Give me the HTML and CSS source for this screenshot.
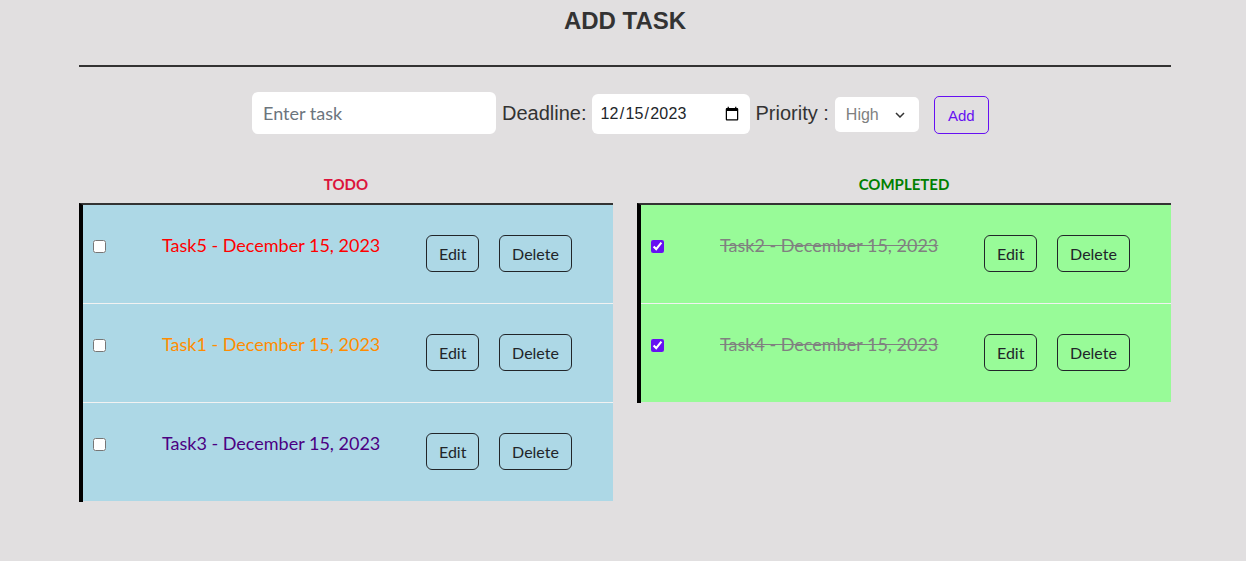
FILE: index.html
```html
<!DOCTYPE html>
<html lang="en">
<head>
<meta charset="utf-8">
<title>Task Manager</title>
<link rel="stylesheet" href="styles.css">
</head>
<body>
<div class="container">
  <h1 class="title">ADD TASK</h1>
  <div class="rule"></div>
  <div class="form-row">
    <input class="task-input" type="text" placeholder="Enter task">
    <label class="lbl lbl-deadline">Deadline:</label>
    <input class="date-input" type="date" value="2023-12-15">
    <label class="lbl lbl-priority">Priority :</label>
    <div class="select-wrap">
      <select class="prio-select">
        <option>High</option>
        <option>Medium</option>
        <option>Low</option>
      </select>
      <svg class="chev" width="10" height="6" viewBox="0 0 10 6"><path d="M1 1l4 4 4-4" fill="none" stroke="#333" stroke-width="1.5"/></svg>
    </div>
    <button class="add-btn">Add</button>
  </div>
  <div class="columns">
    <section class="col">
      <h2 class="col-title todo">TODO</h2>
      <ul class="list todo-list">
        <li class="item">
          <input class="chk" type="checkbox">
          <span class="task-text high">Task5 - December 15, 2023</span>
          <button class="btn edit">Edit</button>
          <button class="btn del">Delete</button>
        </li>
        <li class="item">
          <input class="chk" type="checkbox">
          <span class="task-text medium">Task1 - December 15, 2023</span>
          <button class="btn edit">Edit</button>
          <button class="btn del">Delete</button>
        </li>
        <li class="item">
          <input class="chk" type="checkbox">
          <span class="task-text low">Task3 - December 15, 2023</span>
          <button class="btn edit">Edit</button>
          <button class="btn del">Delete</button>
        </li>
      </ul>
    </section>
    <section class="col">
      <h2 class="col-title done">COMPLETED</h2>
      <ul class="list done-list">
        <li class="item">
          <input class="chk" type="checkbox" checked>
          <span class="task-text completed">Task2 - December 15, 2023</span>
          <button class="btn edit">Edit</button>
          <button class="btn del">Delete</button>
        </li>
        <li class="item">
          <input class="chk" type="checkbox" checked>
          <span class="task-text completed">Task4 - December 15, 2023</span>
          <button class="btn edit">Edit</button>
          <button class="btn del">Delete</button>
        </li>
      </ul>
    </section>
  </div>
</div>
</body>
</html>
```
FILE: styles.css
```css
* { box-sizing: border-box; }

html, body {
  margin: 0;
  padding: 0;
  background: #e1dfe0;
  font-family: Lato, "Liberation Sans", sans-serif;
  color: #212529;
}

.container {
  width: 1092px;
  margin: 0 0 0 79px;
}

.title {
  margin: 0;
  padding-top: 7px;
  text-align: center;
  font-family: "Liberation Sans", Arial, sans-serif;
  font-weight: bold;
  font-size: 24px;
  line-height: 27.6px;
  color: #333;
}

.rule {
  margin-top: 30px;
  border-top: 2px solid #333;
  height: 0;
}

.form-row {
  margin-top: 25px;
  display: flex;
  align-items: center;
  height: 43px;
  padding-left: 173px;
}

.task-input {
  width: 244px;
  height: 42px;
  border: none;
  border-radius: 6px;
  background: #fff;
  padding: 6px 11px;
  font-family: Lato, sans-serif;
  font-size: 18px;
  color: #212529;
  outline: none;
}
.task-input::placeholder { color: #6c757d; }

.lbl {
  font-family: "Liberation Sans", Arial, sans-serif;
  font-size: 20px;
  color: #333;
}
.lbl-deadline { margin: 0 5px 0 6px; }
.lbl-priority { margin: 0 6px 0 6px; }

.date-input {
  width: 158px;
  height: 40px;
  border: none;
  border-radius: 6px;
  background: #fff;
  padding: 6px 8px;
  font-family: "Liberation Sans", Arial, sans-serif;
  font-size: 16px;
  letter-spacing: 0.2px;
  color: #212529;
  margin-top: 2px;
  outline: none;
}

.select-wrap {
  position: relative;
  width: 84px;
  height: 35px;
  margin: 3px 15px 0 0;
}
.prio-select {
  appearance: none;
  -webkit-appearance: none;
  width: 84px;
  height: 35px;
  border: none;
  border-radius: 5px;
  background: #fff;
  padding: 0 0 0 11px;
  font-family: "Liberation Sans", Arial, sans-serif;
  font-size: 16px;
  color: #808080;
  outline: none;
}
.chev {
  position: absolute;
  right: 14px;
  top: 15px;
  pointer-events: none;
}

.add-btn {
  width: 55px;
  height: 38px;
  margin-top: 4px;
  border: 1px solid #6610f2;
  border-radius: 5px;
  background: transparent;
  color: #6610f2;
  font-family: "Liberation Sans", Arial, sans-serif;
  font-size: 15px;
  padding: 0;
}

.columns {
  margin-top: 40px;
  display: grid;
  grid-template-columns: 534px 534px;
  column-gap: 24px;
  align-items: start;
}

.col-title {
  margin: 0 0 10px;
  text-align: center;
  font-family: Lato, sans-serif;
  font-weight: bold;
  font-size: 15px;
  line-height: 18px;
}
.col-title.todo { color: #dc143c; }
.col-title.done { color: #008000; }

.list {
  list-style: none;
  margin: 0;
  padding: 0;
  border-top: 2px solid #333;
  border-left: 4px solid #000;
}
.todo-list .item { background: #add8e6; }
.done-list .item { background: #98fb98; }

.item {
  display: flex;
  align-items: flex-start;
  height: 99px;
  border-bottom: 1px solid #f2f2f2;
  padding: 28px 0 0 10px;
}
.item:last-child { border-bottom-color: transparent; background-clip: padding-box; }

.chk {
  width: 13px;
  height: 13px;
  margin: 7px 0 0 0;
  accent-color: #6610f2;
}

.task-text {
  margin: 2px 0 0 56px;
  width: 264px;
  font-family: Lato, sans-serif;
  font-size: 18px;
  line-height: 21.6px;
}
.task-text.high { color: #ff0000; }
.task-text.medium { color: #ff8c00; }
.task-text.low { color: #4b0082; }
.task-text.completed { color: #808080; text-decoration: line-through; }

.btn {
  height: 37px;
  margin-top: 2px;
  border: 1px solid #212529;
  border-radius: 6px;
  background: transparent;
  color: #212529;
  font-family: Lato, sans-serif;
  font-size: 16px;
  padding: 0 12px;
}
.btn.edit { width: 53px; }
.btn.del { width: 73px; margin-left: 20px; }
```
